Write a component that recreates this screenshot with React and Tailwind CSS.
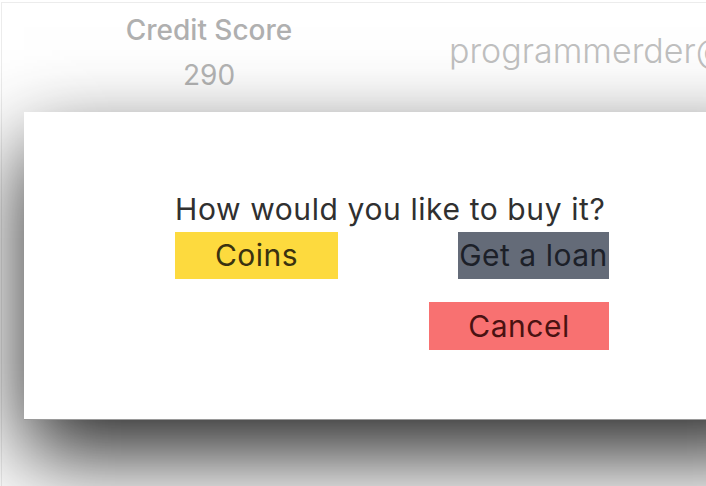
export default function App() {
  return (
    <div className="relative w-[706px] h-[486px] overflow-hidden bg-white" style={{ fontFamily: "Inter, 'Noto Sans', sans-serif" }}>
      <div className="ml-[1px] mt-[2px] h-[484px] border-l border-t border-[#ececec] bg-white">
        <div className="flex items-start">
          <div className="ml-[125px] mt-[10px] w-[164px] flex flex-col items-center">
            <div className="text-[28px] leading-[34px] font-medium text-[#b0b0b0] whitespace-nowrap">Credit Score</div>
            <div className="mt-[11px] text-[28px] leading-[34px] text-[#b4b4b4]">290</div>
          </div>
          <div className="ml-[158px] mt-[28px] whitespace-nowrap text-[34px] leading-[40px] font-light text-[#c0c0c0]">programmerder@gmail.com</div>
        </div>
      </div>
      <div className="absolute left-[24px] top-[112px] w-[760px] h-[308px] bg-white border-b border-[#9a9a9a] shadow-[0_35px_80px_rgba(0,0,0,0.85)]">
        <div className="ml-[151px] mt-[79px] w-[434px] flex flex-col">
          <div className="text-[30px] leading-[36px] tracking-[0.6px] text-[#303030] whitespace-nowrap">How would you like to buy it?</div>
          <div className="mt-[5px] flex justify-between">
            <div className="w-[163px] h-[47px] bg-[#fdda3e] flex items-center justify-center text-[30px] tracking-[0.5px] text-[#3a3210]">Coins</div>
            <div className="w-[151px] h-[47px] bg-[#646b78] flex items-center justify-center text-[30px] tracking-[0.5px] text-[#1c2028] whitespace-nowrap">Get a loan</div>
          </div>
          <div className="mt-[23px] flex justify-end">
            <div className="w-[180px] h-[48px] bg-[#f87171] flex items-center justify-center text-[30px] tracking-[0.5px] text-[#4a1212]">Cancel</div>
          </div>
        </div>
      </div>
    </div>
  );
}
